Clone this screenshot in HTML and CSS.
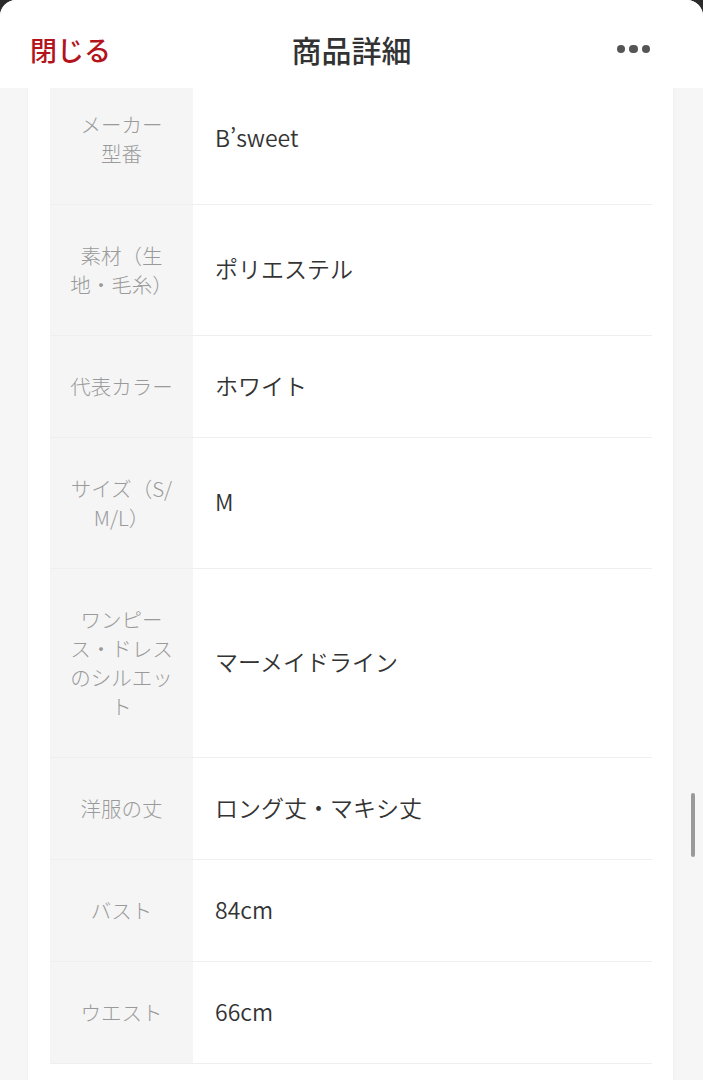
FILE: index.html
```html
<!DOCTYPE html>
<html lang="ja">
<head>
  <meta charset="UTF-8">
  <title>商品詳細</title>
  <meta name="viewport" content="width=device-width, initial-scale=1.0">
  <link rel="stylesheet" href="styles.css">
</head>
<body>

  <div class="sheet">

    <!-- HEADER -->
    <header class="header">
      <div class="close">閉じる</div>
      <h1 class="title">商品詳細</h1>
      <div class="more"><span></span><span></span><span></span></div>
    </header>

    <!-- SPEC TABLE -->
    <div class="card">
      <div class="spec">
        <div class="row">
          <div class="label">メーカー<br>型番</div>
          <div class="value">B’sweet</div>
        </div>
        <div class="row">
          <div class="label">素材（生<br>地・毛糸）</div>
          <div class="value">ポリエステル</div>
        </div>
        <div class="row">
          <div class="label">代表カラー</div>
          <div class="value">ホワイト</div>
        </div>
        <div class="row">
          <div class="label">サイズ（S/<br>M/L）</div>
          <div class="value">M</div>
        </div>
        <div class="row">
          <div class="label">ワンピー<br>ス・ドレス<br>のシルエッ<br>ト</div>
          <div class="value">マーメイドライン</div>
        </div>
        <div class="row">
          <div class="label">洋服の丈</div>
          <div class="value">ロング丈・マキシ丈</div>
        </div>
        <div class="row">
          <div class="label">バスト</div>
          <div class="value">84cm</div>
        </div>
        <div class="row">
          <div class="label">ウエスト</div>
          <div class="value">66cm</div>
        </div>
      </div>
    </div>

    <div class="scrollbar"></div>
  </div>

</body>
</html>
```

FILE: styles.css
```css
* {
  box-sizing: border-box;
  margin: 0;
  padding: 0;
}

body {
  font-family: "Noto Sans CJK JP", "Noto Sans", sans-serif;
  background: #2b2b2b;
  color: #333;
}

.sheet {
  position: relative;
  height: 1080px;
  overflow: hidden;
  background: #f6f6f6;
  border-radius: 16px 16px 0 0;
}

/* header */
.header {
  display: grid;
  grid-template-columns: 1fr auto 1fr;
  align-items: center;
  height: 88px;
  padding: 10px 30px 0;
  background: #fff;
  position: relative;
  z-index: 2;
}

.close {
  color: #b3141c;
  font-size: 27px;
  font-weight: 500;
}

.title {
  font-size: 30px;
  font-weight: 500;
  color: #333;
}

.more {
  justify-self: end;
  display: flex;
  gap: 4px;
  margin-right: 23px;
}

.more span {
  width: 8.5px;
  height: 8.5px;
  border-radius: 50%;
  background: #555;
}

/* card */
.card {
  display: flow-root;
  margin: 0 30px 0 28px;
  height: 992px;
  padding: 0 21px 0 22px;
  background: #fff;
  box-shadow: 0 0 3px rgba(0, 0, 0, 0.05);
}

.spec {
  margin-top: -14px;
}

.row {
  display: flex;
  border-bottom: 1px solid #efefef;
}

.label {
  width: 143px;
  flex-shrink: 0;
  padding: 36px 8px;
  background: #f5f5f5;
  color: #9a9a9a;
  font-size: 20.5px;
  font-weight: 300;
  line-height: 29px;
  text-align: center;
}

.value {
  flex: 1;
  display: flex;
  align-items: center;
  padding: 0 0 4px 22px;
  font-size: 23px;
  font-weight: 350;
  color: #333;
}

.scrollbar {
  position: absolute;
  left: 691px;
  top: 793px;
  width: 4px;
  height: 64px;
  border-radius: 2px;
  background: #9a9a9a;
}
```
